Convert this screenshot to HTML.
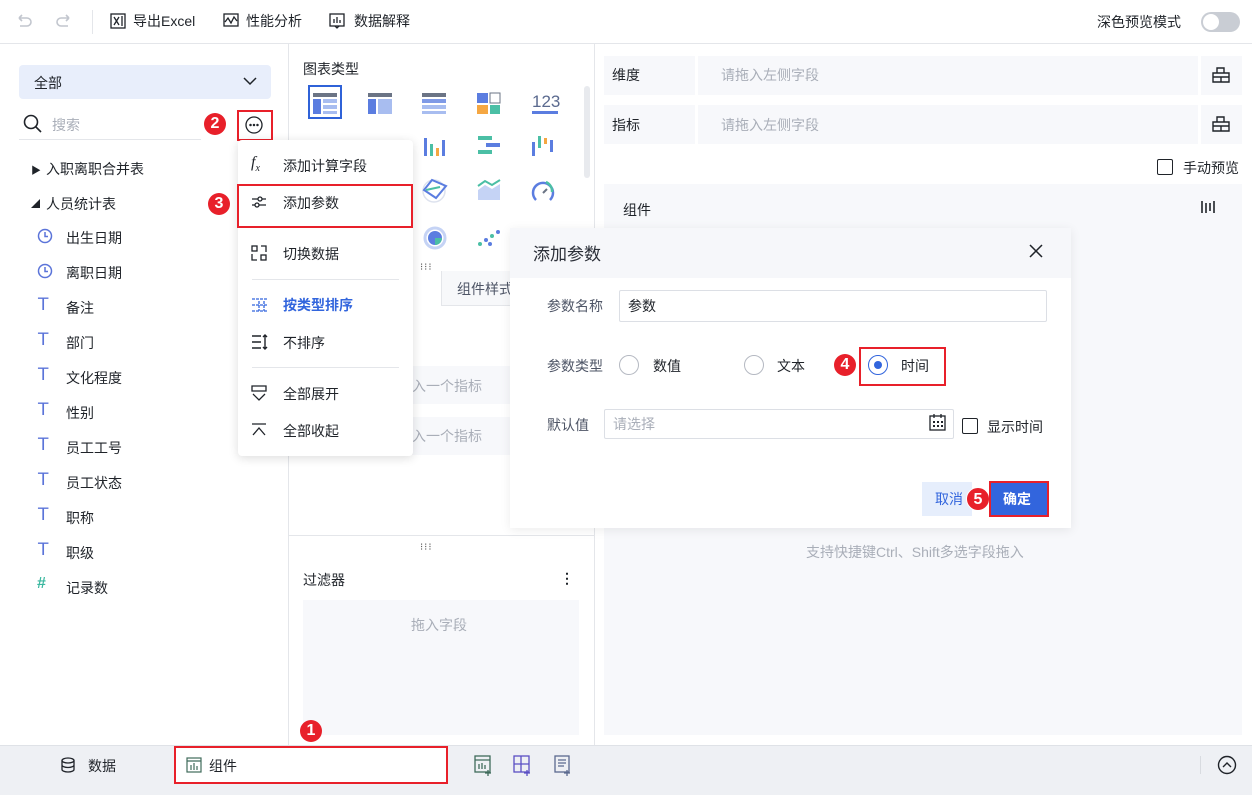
<!DOCTYPE html>
<html><head><meta charset="utf-8"><style>
*{box-sizing:border-box;margin:0;padding:0}
body{width:1252px;height:795px;position:relative;overflow:hidden;background:#fff;font-family:"Liberation Sans","Noto Sans CJK SC",sans-serif;font-size:14px;color:#1f2329}
.a{position:absolute}
.red{position:absolute;border:2px solid #e8202a}
.num{position:absolute;width:22px;height:22px;border-radius:50%;background:#e8202a;color:#fff;font-size:16px;font-weight:bold;text-align:center;line-height:22px}
.t{position:absolute;white-space:nowrap}
.gray{color:#a9aeb8}
.ti{position:absolute;left:38px;color:#5b74d9;font-size:17px;font-family:"DejaVu Sans",sans-serif}
</style></head><body>
<div class="a" style="left:0;top:0;width:1252px;height:44px;border-bottom:1px solid #e4e6ea"></div>
<svg class="a" style="left:14px;top:12px" width="60" height="20" viewBox="0 0 60 20" fill="none" stroke="#c2c6ce" stroke-width="1.6"><path d="M5 6h8a4 4 0 010 8H6M5 6l3-3M5 6l3 3"/><path d="M55 6h-8a4 4 0 000 8h7M55 6l-3-3M55 6l-3 3"/></svg>
<div class="a" style="left:92px;top:10px;width:1px;height:24px;background:#e4e6ea"></div>
<svg class="a" style="left:110px;top:13px" width="16" height="16" fill="none" stroke="#1f2329" stroke-width="1.3"><rect x="1" y="1" width="14" height="14"/><path d="M4 4l5 8M9 4l-5 8M12 3v10"/></svg>
<div class="t" style="left:133px;top:11px">导出Excel</div>
<svg class="a" style="left:223px;top:13px" width="16" height="16" fill="none" stroke="#1f2329" stroke-width="1.3"><rect x="1" y="1" width="14" height="12"/><path d="M2 9l3-4 3 5 3-6 3 4"/></svg>
<div class="t" style="left:246px;top:11px">性能分析</div>
<svg class="a" style="left:329px;top:13px" width="16" height="16" fill="none" stroke="#1f2329" stroke-width="1.3"><rect x="1" y="1" width="14" height="12"/><path d="M5 10V6M8 10V4M11 10V7M6 13l2 2 2-2"/></svg>
<div class="t" style="left:354px;top:11px">数据解释</div>
<div class="t" style="left:1097px;top:12px">深色预览模式</div>
<div class="a" style="left:1201px;top:12px;width:39px;height:20px;border-radius:10px;background:#c9cdd4"><div class="a" style="left:2px;top:2px;width:16px;height:16px;border-radius:50%;background:#fff"></div></div>

<div class="a" style="left:288px;top:44px;width:1px;height:701px;background:#e4e6ea"></div>
<div class="a" style="left:19px;top:65px;width:252px;height:34px;border-radius:4px;background:#e8eefb"></div>
<div class="t" style="left:34px;top:73px">全部</div>
<svg class="a" style="left:243px;top:76px" width="14" height="10" fill="none" stroke="#1f2329" stroke-width="1.5"><path d="M1 2l6 6 6-6"/></svg>
<svg class="a" style="left:23px;top:114px" width="20" height="20" fill="none" stroke="#1f2329" stroke-width="1.6"><circle cx="8" cy="8" r="6.5"/><path d="M13 13l5 5"/></svg>
<div class="t gray" style="left:52px;top:115px">搜索</div>
<div class="a" style="left:19px;top:139px;width:182px;height:1px;background:#e4e6ea"></div>
<div class="num" style="left:204px;top:113px">2</div>
<div class="red" style="left:237px;top:110px;width:36px;height:31px"></div>
<svg class="a" style="left:244px;top:115px" width="20" height="20" fill="none" stroke="#1f2329" stroke-width="1.3"><circle cx="10" cy="10" r="8"/><circle cx="6.5" cy="10" r=".6" fill="#1f2329"/><circle cx="10" cy="10" r=".6" fill="#1f2329"/><circle cx="13.5" cy="10" r=".6" fill="#1f2329"/></svg>
<div class="t" style="left:31px;top:162px;font-size:10px">▶</div>
<div class="t" style="left:46px;top:159px">入职离职合并表</div>
<div class="t" style="left:31px;top:197px;font-size:9px">◢</div>
<div class="t" style="left:46px;top:194px">人员统计表</div>
<svg class="a" style="left:37px;top:228px" width="16" height="16" fill="none" stroke="#5b74d9" stroke-width="1.5"><circle cx="8" cy="8" r="6.5"/><path d="M8 4v4.5h3"/></svg>
<div class="t" style="left:66px;top:228px">出生日期</div>
<svg class="a" style="left:37px;top:263px" width="16" height="16" fill="none" stroke="#5b74d9" stroke-width="1.5"><circle cx="8" cy="8" r="6.5"/><path d="M8 4v4.5h3"/></svg>
<div class="t" style="left:66px;top:263px">离职日期</div>
<div class="ti" style="top:295px">T</div><div class="t" style="left:66px;top:298px">备注</div>
<div class="ti" style="top:330px">T</div><div class="t" style="left:66px;top:333px">部门</div>
<div class="ti" style="top:365px">T</div><div class="t" style="left:66px;top:368px">文化程度</div>
<div class="ti" style="top:400px">T</div><div class="t" style="left:66px;top:403px">性别</div>
<div class="ti" style="top:435px">T</div><div class="t" style="left:66px;top:438px">员工工号</div>
<div class="ti" style="top:470px">T</div><div class="t" style="left:66px;top:473px">员工状态</div>
<div class="ti" style="top:505px">T</div><div class="t" style="left:66px;top:508px">职称</div>
<div class="ti" style="top:540px">T</div><div class="t" style="left:66px;top:543px">职级</div>
<div class="t" style="left:37px;top:575px;color:#3cb8a0;font-weight:bold;font-size:16px">#</div>
<div class="t" style="left:66px;top:578px">记录数</div>

<div class="a" style="left:594px;top:44px;width:1px;height:701px;background:#e4e6ea"></div>
<div class="t" style="left:303px;top:59px">图表类型</div>
<div class="a" style="left:584px;top:86px;width:6px;height:92px;border-radius:3px;background:#e8eaee"></div>
<div class="a" style="left:308px;top:85px;width:34px;height:34px;border:2px solid #2f62d8"></div>
<svg class="a" style="left:310px;top:90px" width="260" height="160">
<rect x="3" y="3" width="24" height="4" fill="#6b7485"/><rect x="3" y="9" width="8" height="15" fill="#5b7de0"/><rect x="13" y="9" width="14" height="4" fill="#a8bdf0"/><rect x="13" y="15" width="14" height="4" fill="#a8bdf0"/><rect x="13" y="21" width="14" height="3" fill="#a8bdf0"/>
<rect x="58" y="3" width="24" height="4" fill="#6b7485"/><rect x="58" y="9" width="8" height="15" fill="#5b7de0"/><rect x="68" y="9" width="14" height="15" fill="#a8bdf0"/>
<rect x="112" y="3" width="24" height="4" fill="#6b7485"/><rect x="112" y="9" width="24" height="4" fill="#7f9ae6"/><rect x="112" y="15" width="24" height="4" fill="#a8bdf0"/><rect x="112" y="21" width="24" height="3" fill="#a8bdf0"/>
<rect x="167" y="3" width="11" height="10" fill="#5b7de0"/><rect x="180" y="3" width="10" height="10" fill="none" stroke="#6b7485"/><rect x="167" y="15" width="11" height="9" fill="#f5a742"/><rect x="180" y="15" width="10" height="9" fill="#4bbfa5"/>
<text x="222" y="17" font-size="17" fill="#5b6a8f" font-family="Liberation Sans">123</text><rect x="222" y="21" width="26" height="3" fill="#5b7de0"/>
<rect x="114" y="48" width="3" height="18" fill="#5b7de0"/><rect x="120" y="54" width="3" height="12" fill="#4bbfa5"/><rect x="126" y="58" width="3" height="8" fill="#f5a742"/><rect x="132" y="50" width="3" height="16" fill="#5b7de0"/>
<rect x="168" y="46" width="14" height="4" fill="#4bbfa5"/><rect x="176" y="53" width="14" height="4" fill="#5b7de0"/><rect x="168" y="60" width="14" height="4" fill="#4bbfa5"/>
<rect x="222" y="52" width="3" height="14" fill="#5b7de0"/><rect x="228" y="46" width="3" height="12" fill="#4bbfa5"/><rect x="234" y="48" width="3" height="6" fill="#f5a742"/><rect x="240" y="50" width="3" height="12" fill="#5b7de0"/>
<circle cx="124" cy="101" r="11" fill="none" stroke="#dde2ee" stroke-width="1.5"/><path d="M114 100l8-10 14 6-10 12z" fill="none" stroke="#5b7de0" stroke-width="2"/><path d="M116 100l14-3" stroke="#4bbfa5" stroke-width="2"/>
<path d="M168 100l7-5 7 4 8-5v16h-22z" fill="#c5d3f5"/><path d="M168 96l7-5 7 4 8-5" fill="none" stroke="#4bbfa5" stroke-width="2"/>
<path d="M226 110a10 10 0 1 1 14 0" fill="none" stroke="#5b7de0" stroke-width="2.5"/><path d="M236 92a10 10 0 0 1 6 10" fill="none" stroke="#4bbfa5" stroke-width="2.5"/><path d="M233 103l4-4" stroke="#6b7485" stroke-width="2"/>
<circle cx="125" cy="148" r="10" fill="none" stroke="#c5d3f5" stroke-width="3"/><circle cx="125" cy="148" r="7" fill="#5b7de0"/><path d="M125 148h7a7 7 0 01-7 7z" fill="#4bbfa5"/>
<circle cx="170" cy="154" r="2" fill="#4bbfa5"/><circle cx="176" cy="150" r="2" fill="#5b7de0"/><circle cx="182" cy="146" r="2" fill="#4bbfa5"/><circle cx="188" cy="142" r="2" fill="#5b7de0"/><circle cx="180" cy="154" r="2" fill="#5b7de0"/>
</svg>
<div class="t" style="left:420px;top:262px;font-size:10px;letter-spacing:1px;color:#555">⁝⁝⁝</div>
<div class="a" style="left:441px;top:271px;width:70px;height:35px;background:#f7f8fa;border:1px solid #e4e6ea;border-top:none"></div>
<div class="t" style="left:457px;top:279px;color:#4e5566">组件样式</div>
<div class="a" style="left:300px;top:366px;width:210px;height:38px;background:#f7f8fb"></div>
<div class="t gray" style="left:412px;top:376px">入一个指标</div>
<div class="a" style="left:300px;top:417px;width:210px;height:38px;background:#f7f8fb"></div>
<div class="t gray" style="left:412px;top:426px">入一个指标</div>
<div class="a" style="left:289px;top:535px;width:306px;height:1px;background:#e4e6ea"></div>
<div class="t" style="left:420px;top:542px;font-size:10px;letter-spacing:1px;color:#555">⁝⁝⁝</div>
<div class="t" style="left:303px;top:570px">过滤器</div>
<div class="t" style="left:560px;top:570px;font-weight:bold">⋮</div>
<div class="a" style="left:303px;top:600px;width:276px;height:135px;background:#f7f8fb"></div>
<div class="t gray" style="left:411px;top:615px">拖入字段</div>

<div class="a" style="left:604px;top:56px;width:638px;height:39px;background:#f7f8fb"></div>
<div class="a" style="left:695px;top:56px;width:3px;height:39px;background:#fff"></div>
<div class="a" style="left:1198px;top:56px;width:3px;height:39px;background:#fff"></div>
<div class="t" style="left:612px;top:65px">维度</div>
<div class="t gray" style="left:721px;top:65px">请拖入左侧字段</div>
<div class="a" style="left:604px;top:105px;width:638px;height:39px;background:#f7f8fb"></div>
<div class="a" style="left:695px;top:105px;width:3px;height:39px;background:#fff"></div>
<div class="a" style="left:1198px;top:105px;width:3px;height:39px;background:#fff"></div>
<div class="t" style="left:612px;top:115px">指标</div>
<div class="t gray" style="left:721px;top:115px">请拖入左侧字段</div>
<svg class="a" style="left:1212px;top:66px" width="18" height="18" fill="none" stroke="#1f2329" stroke-width="1.4"><path d="M5 7V2h7v5M1 7h16v9H1zM1 11h16M9 11v5"/></svg>
<svg class="a" style="left:1212px;top:115px" width="18" height="18" fill="none" stroke="#1f2329" stroke-width="1.4"><path d="M5 7V2h7v5M1 7h16v9H1zM1 11h16M9 11v5"/></svg>
<div class="a" style="left:1157px;top:159px;width:16px;height:16px;border:1.5px solid #1f2329;border-radius:2px"></div>
<div class="t" style="left:1183px;top:158px">手动预览</div>
<div class="a" style="left:604px;top:184px;width:638px;height:551px;background:#f7f8fb"></div>
<div class="t" style="left:623px;top:200px">组件</div>
<svg class="a" style="left:1200px;top:199px" width="16" height="16" stroke="#1f2329" stroke-width="1.6"><path d="M2 2v12M6 4v10M10 4v8M14 2v12"/></svg>
<div class="t gray" style="left:806px;top:542px">支持快捷键Ctrl、Shift多选字段拖入</div>

<div class="a" style="left:510px;top:228px;width:561px;height:300px;background:#fff;box-shadow:0 2px 10px rgba(0,0,0,.08)"></div>
<div class="a" style="left:510px;top:228px;width:561px;height:50px;background:#f6f7fa"></div>
<div class="t" style="left:533px;top:240px;font-size:17px;color:#2b2f38">添加参数</div>
<svg class="a" style="left:1029px;top:244px" width="14" height="14" stroke="#1f2329" stroke-width="1.5"><path d="M1 1l12 12M13 1L1 13"/></svg>
<div class="t" style="left:547px;top:296px;color:#4e5566">参数名称</div>
<div class="a" style="left:619px;top:290px;width:428px;height:32px;border:1px solid #dcdfe5;border-radius:2px"></div>
<div class="t" style="left:628px;top:296px">参数</div>
<div class="t" style="left:547px;top:356px;color:#4e5566">参数类型</div>
<div class="a" style="left:619px;top:355px;width:20px;height:20px;border:1px solid #b5b9c2;border-radius:50%"></div>
<div class="t" style="left:653px;top:356px">数值</div>
<div class="a" style="left:744px;top:355px;width:20px;height:20px;border:1px solid #b5b9c2;border-radius:50%"></div>
<div class="t" style="left:777px;top:356px">文本</div>
<div class="num" style="left:834px;top:354px">4</div>
<div class="red" style="left:859px;top:347px;width:87px;height:39px"></div>
<div class="a" style="left:868px;top:355px;width:20px;height:20px;border:1px solid #3265dd;border-radius:50%"><div class="a" style="left:5px;top:5px;width:8px;height:8px;border-radius:50%;background:#3265dd"></div></div>
<div class="t" style="left:901px;top:356px">时间</div>
<div class="t" style="left:547px;top:415px;color:#4e5566">默认值</div>
<div class="a" style="left:604px;top:409px;width:350px;height:30px;border:1px solid #dcdfe5;border-radius:2px"></div>
<div class="t gray" style="left:613px;top:414px">请选择</div>
<svg class="a" style="left:929px;top:414px" width="18" height="18" fill="none" stroke="#1f2329" stroke-width="1.3"><rect x="1" y="2" width="15" height="14"/><path d="M5 0v4M12 0v4" /><g fill="#1f2329" stroke="none"><rect x="4" y="7" width="2" height="2"/><rect x="8" y="7" width="2" height="2"/><rect x="12" y="7" width="2" height="2"/><rect x="4" y="11" width="2" height="2"/><rect x="8" y="11" width="2" height="2"/><rect x="12" y="11" width="2" height="2"/></g></svg>
<div class="a" style="left:962px;top:418px;width:16px;height:16px;border:1.5px solid #1f2329;border-radius:2px"></div>
<div class="t" style="left:987px;top:417px">显示时间</div>
<div class="a" style="left:922px;top:482px;width:50px;height:34px;background:#e6eefc"></div>
<div class="t" style="left:935px;top:489px;color:#3265dd">取消</div>
<div class="num" style="left:966px;top:487px;width:24px;height:24px;line-height:24px;border:1px solid #fff">5</div>
<div class="a" style="left:989px;top:481px;width:60px;height:36px;background:#3265dd;border:2px solid #e8202a"></div>
<div class="t" style="left:1003px;top:489px;color:#fff;font-weight:bold">确定</div>

<div class="a" style="left:238px;top:140px;width:175px;height:316px;background:#fff;border-radius:4px;box-shadow:0 2px 10px rgba(0,0,0,.14)"></div>
<div class="t" style="left:251px;top:154px;font-style:italic;font-family:'Liberation Serif',serif;font-size:16px">f<sub style="font-size:10px">x</sub></div>
<div class="t" style="left:283px;top:156px">添加计算字段</div>
<div class="red" style="left:237px;top:184px;width:176px;height:44px"></div>
<svg class="a" style="left:251px;top:195px" width="16" height="14" fill="none" stroke="#1f2329" stroke-width="1.3"><path d="M1 4h14M1 10h14"/><circle cx="9" cy="4" r="2" fill="#fff"/><circle cx="6" cy="10" r="2" fill="#fff"/></svg>
<div class="t" style="left:283px;top:193px">添加参数</div>
<div class="num" style="left:208px;top:193px">3</div>
<svg class="a" style="left:251px;top:245px" width="16" height="16" fill="none" stroke="#1f2329" stroke-width="1.3"><rect x="1" y="1" width="5" height="5"/><rect x="10" y="10" width="5" height="5"/><path d="M1 9v6h5M15 7V1h-5"/></svg>
<div class="t" style="left:283px;top:244px">切换数据</div>
<div class="a" style="left:252px;top:279px;width:147px;height:1px;background:#e4e6ea"></div>
<svg class="a" style="left:251px;top:297px" width="18" height="16" fill="none" stroke="#3265dd" stroke-width="1.3"><path d="M1 2h16M1 8h16M1 14h16M8 4v10M13 4v10" stroke-dasharray="3 1"/></svg>
<div class="t" style="left:283px;top:295px;color:#3265dd;font-weight:bold">按类型排序</div>
<svg class="a" style="left:251px;top:334px" width="18" height="16" fill="none" stroke="#1f2329" stroke-width="1.4"><path d="M1 2h9M1 8h9M1 14h9M14 1v14M12 3l2-2 2 2M12 13l2 2 2-2"/></svg>
<div class="t" style="left:283px;top:333px">不排序</div>
<div class="a" style="left:252px;top:367px;width:147px;height:1px;background:#e4e6ea"></div>
<svg class="a" style="left:251px;top:385px" width="16" height="16" fill="none" stroke="#1f2329" stroke-width="1.3"><path d="M1 1h14v5H1zM2 9l6 6 6-6"/></svg>
<div class="t" style="left:283px;top:384px">全部展开</div>
<svg class="a" style="left:251px;top:423px" width="16" height="14" fill="none" stroke="#1f2329" stroke-width="1.3"><path d="M1 1h14M2 12l6-7 6 7"/></svg>
<div class="t" style="left:283px;top:421px">全部收起</div>

<div class="a" style="left:0;top:745px;width:1252px;height:50px;background:#eef0f4;border-top:1px solid #dfe2e7"></div>
<svg class="a" style="left:60px;top:757px" width="16" height="16" fill="none" stroke="#1f2329" stroke-width="1.3"><ellipse cx="8" cy="3.5" rx="6" ry="2.5"/><path d="M2 3.5v9c0 1.4 2.7 2.5 6 2.5s6-1.1 6-2.5v-9M2 8c0 1.4 2.7 2.5 6 2.5s6-1.1 6-2.5"/></svg>
<div class="t" style="left:88px;top:756px">数据</div>
<div class="a" style="left:174px;top:746px;width:274px;height:38px;background:#fff;border:2px solid #e8202a"></div>
<svg class="a" style="left:186px;top:757px" width="16" height="16" fill="none" stroke="#3f6b5b" stroke-width="1.2"><rect x="1" y="1" width="14" height="14"/><path d="M1 4h14M5 13V8M8 13V6M11 13V9"/></svg>
<div class="t" style="left:209px;top:756px">组件</div>
<div class="num" style="left:300px;top:720px">1</div>
<svg class="a" style="left:474px;top:754px" width="110" height="22" fill="none" stroke-width="1.3"><g stroke="#3f6b5b"><rect x="1" y="2" width="15" height="16"/><path d="M1 6h15M5 15v-5M8 15v-6M11 15v-4M14 16v6M11 19h6"/></g><g stroke="#5a4fc4"><rect x="40" y="2" width="15" height="16"/><path d="M40 10h15M47 2v16M53 16v6M50 19h6"/></g><g stroke="#5b6a8f"><rect x="81" y="2" width="14" height="16"/><path d="M84 6h8M84 9h8M84 12h6M93 16v6M90 19h6"/></g></svg>
<div class="a" style="left:1200px;top:756px;width:1px;height:18px;background:#d8dbe0"></div>
<svg class="a" style="left:1217px;top:755px" width="20" height="20" fill="none" stroke="#1f2329" stroke-width="1.4"><circle cx="10" cy="10" r="8.5"/><path d="M6 12l4-4 4 4"/></svg>
</body></html>
